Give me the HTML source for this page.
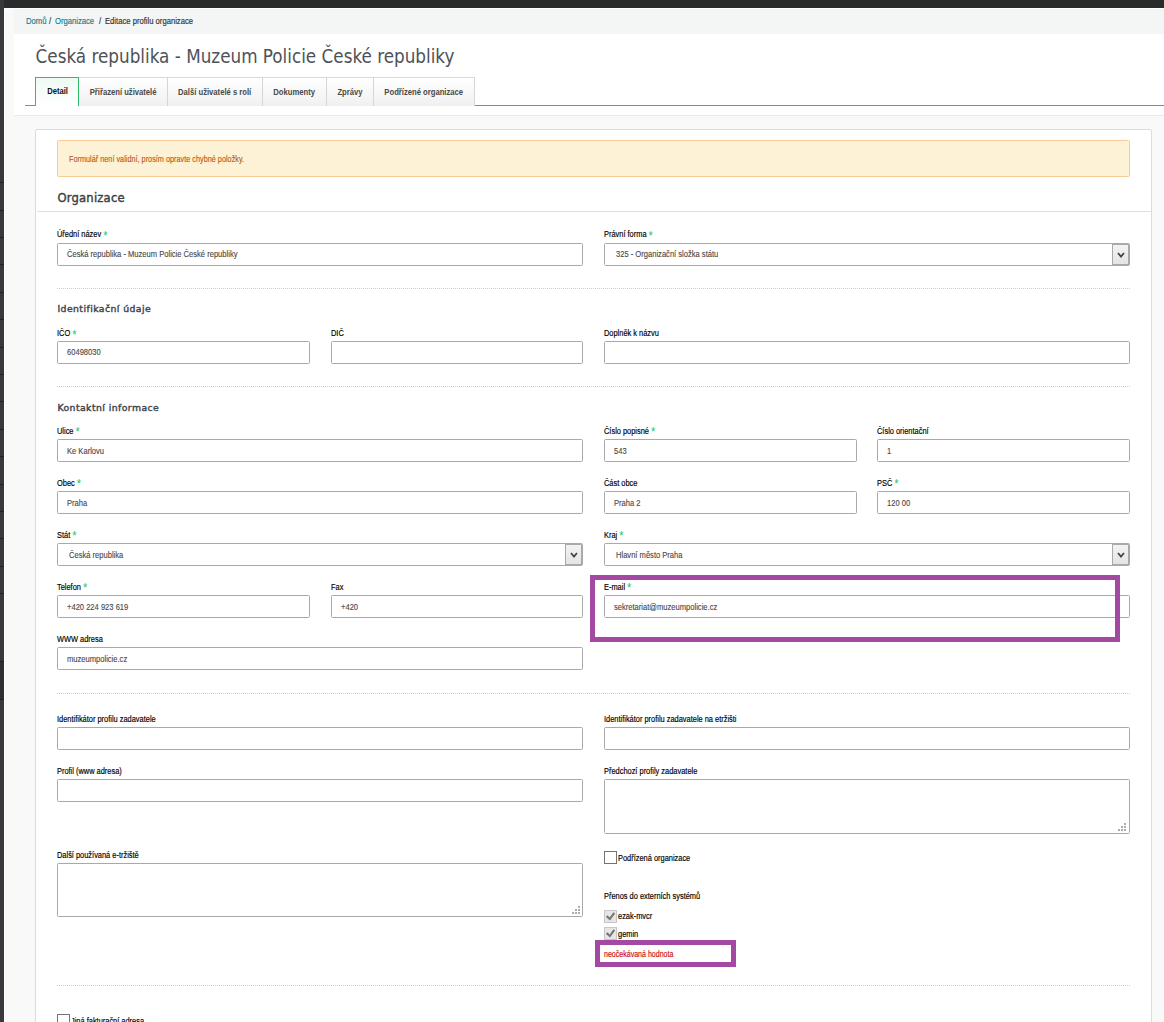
<!DOCTYPE html>
<html lang="cs"><head><meta charset="utf-8"><title>Editace profilu organizace</title>
<style>
*{box-sizing:border-box;margin:0;padding:0}
html,body{width:1164px;height:1022px;overflow:hidden}
body{background:#f9f9f9;font-family:"Liberation Sans",sans-serif;font-size:7.5px;color:#111;position:relative}
.abs,.abs>*{position:absolute}
#side{left:0;top:0;width:4px;height:1022px;background:#37393d}
#side i{left:0;width:4px;height:1px;background:#1f2023}
#side b{left:0;width:4px;top:661px;height:39px;background:#2d2f32;border-top:1px solid #1f2023;border-bottom:1px solid #1f2023}
#topbar{left:4px;top:0;width:1160px;height:7.5px;background:#2a2b2d}
#wb1{left:4px;top:7.5px;width:1160px;height:1.5px;background:#fff}
#wb2{left:4px;top:7.5px;width:1.3px;height:1015px;background:#fff}
#crumb{left:14px;top:9px;width:1150px;height:25px;background:#f4f6f5}
#crumb span{top:7.3px;white-space:pre;font-size:8.6px;line-height:10px;color:#2e2e2e;transform:scaleX(.89);transform-origin:0 0;-webkit-text-stroke:0.15px}
#crumb a{color:#08808f;text-decoration:none}
#head{left:14px;top:34px;width:1150px;height:82px;background:#fff;border-bottom:1px solid #e7eaec}
h1{left:21.6px;top:11px;font-family:"DejaVu Sans Condensed","DejaVu Sans",sans-serif;font-weight:400;font-size:18.7px;line-height:24px;color:#4d5258;white-space:pre}
#gl1{left:11px;top:70.9px;width:11px;height:1px;background:#2dbd6e}
#gl2{left:460.7px;top:70.9px;width:700px;height:1px;background:#2dbd6e}
#strip{left:65px;top:43px;width:396px;height:29px;border-top:1px solid #d9d9d9;background:linear-gradient(#fff,#f0f0f0)}
.sep{top:43px;width:1px;height:29px;background:#d6d6d6}
.tab{top:44.7px;height:28px;font-weight:700;font-size:8.5px;line-height:26.2px;color:#484848;text-align:center;white-space:pre}
.tab span{display:inline-block;transform:scaleX(.9);transform-origin:50% 0}
.tab.on{top:43px;height:29px;line-height:26.6px;padding-left:2px;border:1px solid #2dbd6e;border-bottom:0;background:linear-gradient(#eefaf2,#fff);color:#111}
#panel{left:35.4px;top:129.3px;width:1116.6px;height:920px;background:#fff;border:1px solid #dcdcdc;border-radius:2px}
#alert{left:57.4px;top:140.4px;width:1072.6px;height:36.3px;background:#fdf1d6;border:1px solid #f6cc94;border-radius:1.5px}
#alert span{left:10.8px;top:12.4px;line-height:10px;font-size:8.7px;color:#bb5210;white-space:pre;transform:scaleX(.84);transform-origin:0 0;-webkit-text-stroke:0.1px #bb5210}
h2{left:57.4px;top:189.2px;font-family:"DejaVu Sans Condensed","DejaVu Sans",sans-serif;font-weight:400;font-size:12.9px;letter-spacing:.2px;line-height:18px;color:#3a3f45;-webkit-text-stroke:0.4px #3a3f45;white-space:pre}
#hr0{left:37px;top:211px;width:1114px;height:1px;background:#dedede}
.hr{left:57.4px;width:1072.6px;height:0;border-top:1px dotted #cfcfcf}
h3{left:57.4px;font-family:"DejaVu Sans",sans-serif;font-weight:400;font-size:9.3px;line-height:14px;letter-spacing:.43px;color:#3f454c;-webkit-text-stroke:0.4px #3f454c;white-space:pre}
.lb{line-height:10px;font-size:8.3px;color:#000;white-space:pre;-webkit-text-stroke:0.16px #000;transform:scaleX(.895);transform-origin:0 0;margin-left:-.5px}
.lb em{font-style:normal;color:#27c26c;-webkit-text-stroke:0;font-size:12.2px;line-height:0;position:relative;top:2.7px;left:0px}
.in{height:22.6px;border:1px solid #a9a9a9;border-radius:1.5px;background:#fff;font-size:8.2px;line-height:23.6px;color:#484848;-webkit-text-stroke:0.12px #484848;padding-left:8.6px;white-space:pre;overflow:hidden}
.in span{display:inline-block;transform:scaleX(.925);transform-origin:0 0}
.sel{padding-left:10.8px}
.sel s{right:0;top:0;width:17px;height:20.6px;background:linear-gradient(#f3f3f3,#e4e4e4);border:1px solid #a9a9a9;border-width:1px 1.5px 1.5px 1px;text-decoration:none}
.sel svg{left:4px;top:6.5px;width:8px;height:7px}
.ta{border:1px solid #a9a9a9;border-radius:1.5px;background:#fff}
.ta svg{right:2.9px;bottom:2.3px;width:8px;height:8px}
.cb{width:13px;height:13px;border:1px solid #737373;background:#fff}
.cb.dis{border-color:#c6c6c6;background:#e6e6e6}
.cb svg{left:1px;top:1px;width:9px;height:9px}
.err{color:#cc0a0a;line-height:10px;font-size:8.3px;white-space:pre;-webkit-text-stroke:0.15px #cc0a0a;transform:scaleX(.85);transform-origin:0 0;margin-left:-.4px}
.pr{border:5px solid #a349a4}
</style></head><body>
<div class="abs" id="side">
<i style="top:182.1px"></i>
<i style="top:209.5px"></i>
<i style="top:236.9px"></i>
<i style="top:264.3px"></i>
<i style="top:291.7px"></i>
<i style="top:319.1px"></i>
<i style="top:346.5px"></i>
<i style="top:373.9px"></i>
<i style="top:401.3px"></i>
<i style="top:428.7px"></i>
<i style="top:456.1px"></i>
<i style="top:483.5px"></i>
<i style="top:510.9px"></i>
<i style="top:538.3px"></i>
<i style="top:565.7px"></i>
<i style="top:593.1px"></i>
<b></b></div>
<div class="abs" id="topbar"></div><div class="abs" id="wb1"></div><div class="abs" id="wb2"></div>
<div class="abs" id="crumb"><span style="left:11.5px"><a>Domů</a></span><span style="left:35.2px">/</span><span style="left:41px"><a>Organizace</a></span><span style="left:85.2px">/</span><span style="left:91px">Editace profilu organizace</span></div>
<div class="abs" id="head"><h1>Česká republika - Muzeum Policie České republiky</h1>
<div id="gl1"></div><div id="gl2"></div>
<div id="strip"></div>
<div class="tab on" style="left:21.4px;width:43.2px"><span>Detail</span></div>
<div class="tab" style="left:65.0px;width:88.4px"><span>Přiřazení uživatelé</span></div>
<div class="sep" style="left:153px"></div>
<div class="tab" style="left:153.4px;width:95.3px"><span>Další uživatelé s rolí</span></div>
<div class="sep" style="left:248px"></div>
<div class="tab" style="left:248.7px;width:63.8px"><span>Dokumenty</span></div>
<div class="sep" style="left:312px"></div>
<div class="tab" style="left:312.5px;width:46.9px"><span>Zprávy</span></div>
<div class="sep" style="left:359px"></div>
<div class="tab" style="left:359.4px;width:101.3px"><span>Podřízené organizace</span></div>
<div class="sep" style="left:460px"></div>
</div>
<div class="abs" id="panel"></div>
<div class="abs" id="alert"><span>Formulář není validní, prosím opravte chybné položky.</span></div>
<div class="abs" id="main">
<h2>Organizace</h2><div id="hr0"></div>
<div class="lb" style="left:57.4px;top:229.0px">Úřední název <em>*</em></div>
<div class="in" style="left:57.4px;top:243.4px;width:526.0px;line-height:21.6px"><span>Česká republika - Muzeum Policie České republiky</span></div>
<div class="lb" style="left:604px;top:229.0px">Právní forma <em>*</em></div>
<div class="in sel abs" style="left:604px;top:243.4px;width:525.9px;line-height:21.6px"><span>325 - Organizační složka státu</span><s class="abs"><svg viewBox="0 0 8 7"><path d="M1 1 L4 4.6 L7 1" fill="none" stroke="#444" stroke-width="1.8"/></svg></s></div>
<div class="hr" style="top:288.3px"></div>
<h3 style="top:301.8px">Identifikační údaje</h3>
<div class="lb" style="left:57.4px;top:328.2px">IČO <em>*</em></div>
<div class="in" style="left:57.4px;top:341.2px;width:252.4px;line-height:21.6px"><span>60498030</span></div>
<div class="lb" style="left:331.2px;top:328.2px">DIČ</div>
<div class="in" style="left:331.2px;top:341.2px;width:252.2px;line-height:21.6px"><span></span></div>
<div class="lb" style="left:604px;top:328.2px">Doplněk k názvu</div>
<div class="in" style="left:604px;top:341.2px;width:525.9px;line-height:21.6px"><span></span></div>
<div class="hr" style="top:386.2px"></div>
<h3 style="top:400.8px">Kontaktní informace</h3>
<div class="lb" style="left:57.4px;top:425.5px">Ulice <em>*</em></div>
<div class="in" style="left:57.4px;top:439.3px;width:526.0px"><span>Ke Karlovu</span></div>
<div class="lb" style="left:604px;top:425.5px">Číslo popisné <em>*</em></div>
<div class="in" style="left:604px;top:439.3px;width:252.9px"><span>543</span></div>
<div class="lb" style="left:877.2px;top:425.5px">Číslo orientační</div>
<div class="in" style="left:877.2px;top:439.3px;width:252.7px"><span>1</span></div>
<div class="lb" style="left:57.4px;top:477.5px">Obec <em>*</em></div>
<div class="in" style="left:57.4px;top:491.3px;width:526.0px"><span>Praha</span></div>
<div class="lb" style="left:604px;top:477.5px">Část obce</div>
<div class="in" style="left:604px;top:491.3px;width:252.9px"><span>Praha 2</span></div>
<div class="lb" style="left:877.2px;top:477.5px">PSČ <em>*</em></div>
<div class="in" style="left:877.2px;top:491.3px;width:252.7px"><span>120 00</span></div>
<div class="lb" style="left:57.4px;top:529.5px">Stát <em>*</em></div>
<div class="in sel abs" style="left:57.4px;top:543.3px;width:526.0px"><span>Česká republika</span><s class="abs"><svg viewBox="0 0 8 7"><path d="M1 1 L4 4.6 L7 1" fill="none" stroke="#444" stroke-width="1.8"/></svg></s></div>
<div class="lb" style="left:604px;top:529.5px">Kraj <em>*</em></div>
<div class="in sel abs" style="left:604px;top:543.3px;width:525.9px"><span>Hlavní město Praha</span><s class="abs"><svg viewBox="0 0 8 7"><path d="M1 1 L4 4.6 L7 1" fill="none" stroke="#444" stroke-width="1.8"/></svg></s></div>
<div class="lb" style="left:57.4px;top:581.5px">Telefon <em>*</em></div>
<div class="in" style="left:57.4px;top:595.2px;width:252.4px"><span>+420 224 923 619</span></div>
<div class="lb" style="left:331.2px;top:581.5px">Fax</div>
<div class="in" style="left:331.2px;top:595.2px;width:252.2px"><span>+420</span></div>
<div class="lb" style="left:604px;top:581.5px">E-mail <em>*</em></div>
<div class="in" style="left:604px;top:595.2px;width:525.9px"><span>sekretariat@muzeumpolicie.cz</span></div>
<div class="lb" style="left:57.4px;top:633.5px">WWW adresa</div>
<div class="in" style="left:57.4px;top:647.2px;width:526.0px"><span>muzeumpolicie.cz</span></div>
<div class="hr" style="top:693.3px"></div>
<div class="lb" style="left:57.4px;top:713.5px">Identifikátor profilu zadavatele</div>
<div class="in" style="left:57.4px;top:727.3px;width:526.0px"><span></span></div>
<div class="lb" style="left:604px;top:713.5px">Identifikátor profilu zadavatele na etržišti</div>
<div class="in" style="left:604px;top:727.3px;width:525.9px"><span></span></div>
<div class="lb" style="left:57.4px;top:765.5px">Profil (www adresa)</div>
<div class="in" style="left:57.4px;top:779.3px;width:526.0px"><span></span></div>
<div class="lb" style="left:604px;top:765.5px">Předchozí profily zadavatele</div>
<div class="ta abs" style="left:604px;top:779.3px;width:525.9px;height:55.0px"><svg viewBox="0 0 8 8"><g fill="#adadad"><rect x="6" y="6" width="2" height="2"/><rect x="3" y="6" width="2" height="2"/><rect x="0" y="6" width="2" height="2"/><rect x="6" y="3" width="2" height="2"/><rect x="3" y="3" width="2" height="2"/><rect x="6" y="0" width="2" height="2"/></g></svg></div>
<div class="lb" style="left:57.4px;top:849.5px">Další používaná e-tržiště</div>
<div class="ta abs" style="left:57.4px;top:863.3px;width:526.0px;height:54.0px"><svg viewBox="0 0 8 8"><g fill="#adadad"><rect x="6" y="6" width="2" height="2"/><rect x="3" y="6" width="2" height="2"/><rect x="0" y="6" width="2" height="2"/><rect x="6" y="3" width="2" height="2"/><rect x="3" y="3" width="2" height="2"/><rect x="6" y="0" width="2" height="2"/></g></svg></div>
<div class="cb abs" style="left:603.7px;top:851px"></div><div class="lb" style="left:618.2px;top:853.0px">Podřízená organizace</div>
<div class="lb" style="left:604px;top:890.5px">Přenos do externích systémů</div>
<div class="cb abs dis" style="left:603.7px;top:909.8px"><svg viewBox="0 0 9 9"><path d="M0.7 4.1 L3.8 7 L8.3 0.9" fill="none" stroke="#767676" stroke-width="2.1"/></svg></div><div class="lb" style="left:618.2px;top:911.0px">ezak-mvcr</div>
<div class="cb abs dis" style="left:603.7px;top:927px"><svg viewBox="0 0 9 9"><path d="M0.7 4.1 L3.8 7 L8.3 0.9" fill="none" stroke="#767676" stroke-width="2.1"/></svg></div><div class="lb" style="left:618.2px;top:928.8px">gemin</div>
<div class="err" style="left:604px;top:949.0px">neočekávaná hodnota</div>
<div class="hr" style="top:985.3px"></div>
<div class="cb abs" style="left:57.2px;top:1014.1px"></div><div class="lb" style="left:71.7px;top:1016.1px">Jiná fakturační adresa</div>
<div class="pr" style="left:590px;top:575px;width:530px;height:66.6px"></div>
<div class="pr" style="left:595px;top:940px;width:140.7px;height:26.8px"></div>
</div></body></html>
